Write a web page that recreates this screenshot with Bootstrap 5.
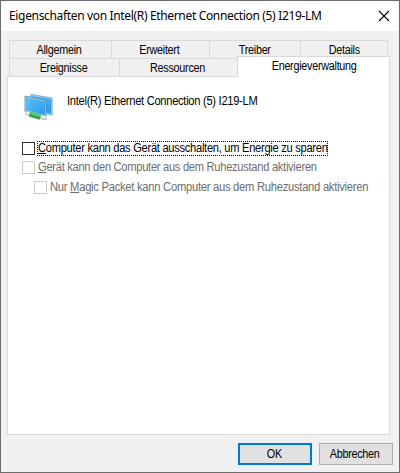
<!DOCTYPE html>
<html lang="de">
<head>
  <meta charset="UTF-8" />
  <meta name="viewport" content="width=device-width, initial-scale=1.0" />
  <title>Eigenschaften von Intel(R) Ethernet Connection (5) I219-LM</title>
  <link href="https://cdn.jsdelivr.net/npm/bootstrap@5.3.0/dist/css/bootstrap.min.css" rel="stylesheet" />
  <style>
    body { font-family: "Liberation Sans", Arial, sans-serif; font-size: 12px; line-height: 14px; letter-spacing: -0.3px; color: #000; white-space: nowrap; overflow: hidden; }
    .dialog-window { width: 400px; height: 473px; background: #f0f0f0; border: 1px solid #6e6b6d; }
    .title-bar { height: 30px; padding: 0 9px 0 8px; background: #fff; font-family: "Noto Sans", "Open Sans", sans-serif; letter-spacing: -0.34px; }
    .tab-area { margin: 9px 9px 0 6px; }
    .tab-line { height: 18px; margin: 0 2px; }
    .tab-item { height: 18px; padding: 2px 2px 0 0; border: solid #d9d9d9; border-width: 1px 0 0 1px; background: #f0f0f0; }
    .tab-item.last-tab { border-right-width: 1px; padding-right: 0; }
    .tab-item.current-tab { height: 21px; margin: -2px -2px 0 0; padding: 2px 0 0; border-right-width: 1px; background: #fff; position: relative; }
    .w-1 { width: 102px; } .w-2 { width: 99px; } .w-3 { width: 91px; } .w-4 { width: 88px; }
    .w-5 { width: 110px; } .w-6 { width: 119px; } .w-7 { width: 153px; }
    .tab-page { height: 359px; border: 1px solid #d9d9d9; background: #fff; padding: 13px 14px 0; }
    /* narrow dialog lettering */
    .narrow { display: inline-block; transform: scaleX(.927); transform-origin: 0 50%; }
    .tab-item .narrow, .dlg-btn .narrow { transform: scaleX(.9); transform-origin: 50% 50%; }
    .device-name { margin-left: 13px; padding-top: 4px; }
    .check-line { height: 15px; }
    .check-line .form-check-input { width: 13px; height: 13px; margin: 0; border: 1px solid #333; border-radius: 0; background: #fff; flex: none; }
    .check-line .form-check-input:disabled { border-color: #ccc; opacity: 1; }
    .check-line label { margin-left: 2px; padding-left: 1px; line-height: 15px; }
    .check-line.off label { color: #6d6d6d; opacity: 1; }
    .check-line .focused { width: 291px; height: 15px; outline: 1px dotted #000; outline-offset: -1px; }
    .first-check { margin-top: 15px; }
    .second-check { margin-top: 4px; }
    .third-check { margin: 5px 0 0 12px; }
    .third-check .narrow { transform: scaleX(.936); }
    .dlg-btn { width: 74px; height: 22px; padding: 0 2px 0 0; border: 1px solid #adadad; border-radius: 0; background: #e1e1e1; color: #000; font-size: 12px; line-height: 14px; letter-spacing: inherit; }
    .dlg-btn.default-btn { border: 2px solid #0078d7; }
    .btn-line { margin: 8px 6px 0 0; gap: 7px; }
  </style>
</head>
<body>
  <div class="dialog-window">
    <div class="title-bar d-flex align-items-center justify-content-between">
      <span id="dialogTitle">Eigenschaften von Intel(R) Ethernet Connection (5) I219-LM</span>
      <svg width="12" height="12" viewBox="0 0 12 12"><path d="M1 1 L11 11 M11 1 L1 11" stroke="#000" stroke-width="1.1" fill="none"/></svg>
    </div>

    <div class="tab-area">
      <div class="tab-line d-flex text-center">
        <div class="tab-item w-1"><span class="narrow">Allgemein</span></div>
        <div class="tab-item w-2"><span class="narrow">Erweitert</span></div>
        <div class="tab-item w-3"><span class="narrow">Treiber</span></div>
        <div class="tab-item last-tab w-4"><span class="narrow">Details</span></div>
      </div>
      <div class="tab-line d-flex text-center">
        <div class="tab-item w-5"><span class="narrow">Ereignisse</span></div>
        <div class="tab-item w-6"><span class="narrow">Ressourcen</span></div>
        <div class="tab-item current-tab w-7"><span class="narrow">Energieverwaltung</span></div>
      </div>

      <div class="tab-page">
        <div class="d-flex">
          <svg width="32" height="36" viewBox="0 0 32 36">
            <defs>
              <linearGradient id="screen" x1="0" y1="0" x2="1" y2="1">
                <stop offset="0" stop-color="#62c2fa"/>
                <stop offset="1" stop-color="#2a9aec"/>
              </linearGradient>
            </defs>
            <!-- rear and front monitors -->
            <path d="M8.8 4.3 L30.2 8 L30.2 25.2 L8.8 20.5 Z" fill="#a5d6f2" stroke="#5d8ba8" stroke-width=".6"/>
            <path d="M9.8 5.6 L29.2 9 L29.2 23.8 L9.8 19.5 Z" fill="url(#screen)"/>
            <path d="M3 6 L24 10.3 L24 26.8 L3 21.3 Z" fill="#b5dff5" stroke="#3f718f" stroke-width=".7"/>
            <path d="M4 7.3 L23 11.2 L23 25.3 L4 20.3 Z" fill="url(#screen)"/>
            <!-- cable -->
            <path d="M5.2 23.3 L23 28.2" stroke="#b7bdba" stroke-width="4" stroke-linecap="round"/>
            <path d="M5.2 22.9 L23 27.5" stroke="#edf0ef" stroke-width="2.6" stroke-linecap="round"/>
            <path d="M7.5 24 L18.5 27.2" stroke="#35a64a" stroke-width="5.2"/>
            <path d="M7.8 22.9 L18.8 26" stroke="#67cf70" stroke-width="2"/>
          </svg>
          <div class="device-name"><span class="narrow">Intel(R) Ethernet Connection (5) I219-LM</span></div>
        </div>

        <div class="check-line first-check d-flex align-items-center">
          <input class="form-check-input" type="checkbox" id="allowOff">
          <label class="focused" for="allowOff"><span class="narrow"><u>C</u>omputer kann das Gerät ausschalten, um Energie zu sparen</span></label>
        </div>
        <div class="check-line off second-check d-flex align-items-center">
          <input class="form-check-input" type="checkbox" id="allowWake" disabled>
          <label for="allowWake"><span class="narrow"><u>G</u>erät kann den Computer aus dem Ruhezustand aktivieren</span></label>
        </div>
        <div class="check-line off third-check d-flex align-items-center">
          <input class="form-check-input" type="checkbox" id="magicPacket" disabled>
          <label for="magicPacket"><span class="narrow">Nur <u>M</u>agic Packet kann Computer aus dem Ruhezustand aktivieren</span></label>
        </div>
      </div>
    </div>

    <div class="btn-line d-flex justify-content-end">
      <button type="button" class="btn dlg-btn default-btn"><span class="narrow">OK</span></button>
      <button type="button" class="btn dlg-btn"><span class="narrow">Abbrechen</span></button>
    </div>
  </div>

  <script src="https://cdn.jsdelivr.net/npm/bootstrap@5.3.0/dist/js/bootstrap.bundle.min.js"></script>
</body>
</html>
